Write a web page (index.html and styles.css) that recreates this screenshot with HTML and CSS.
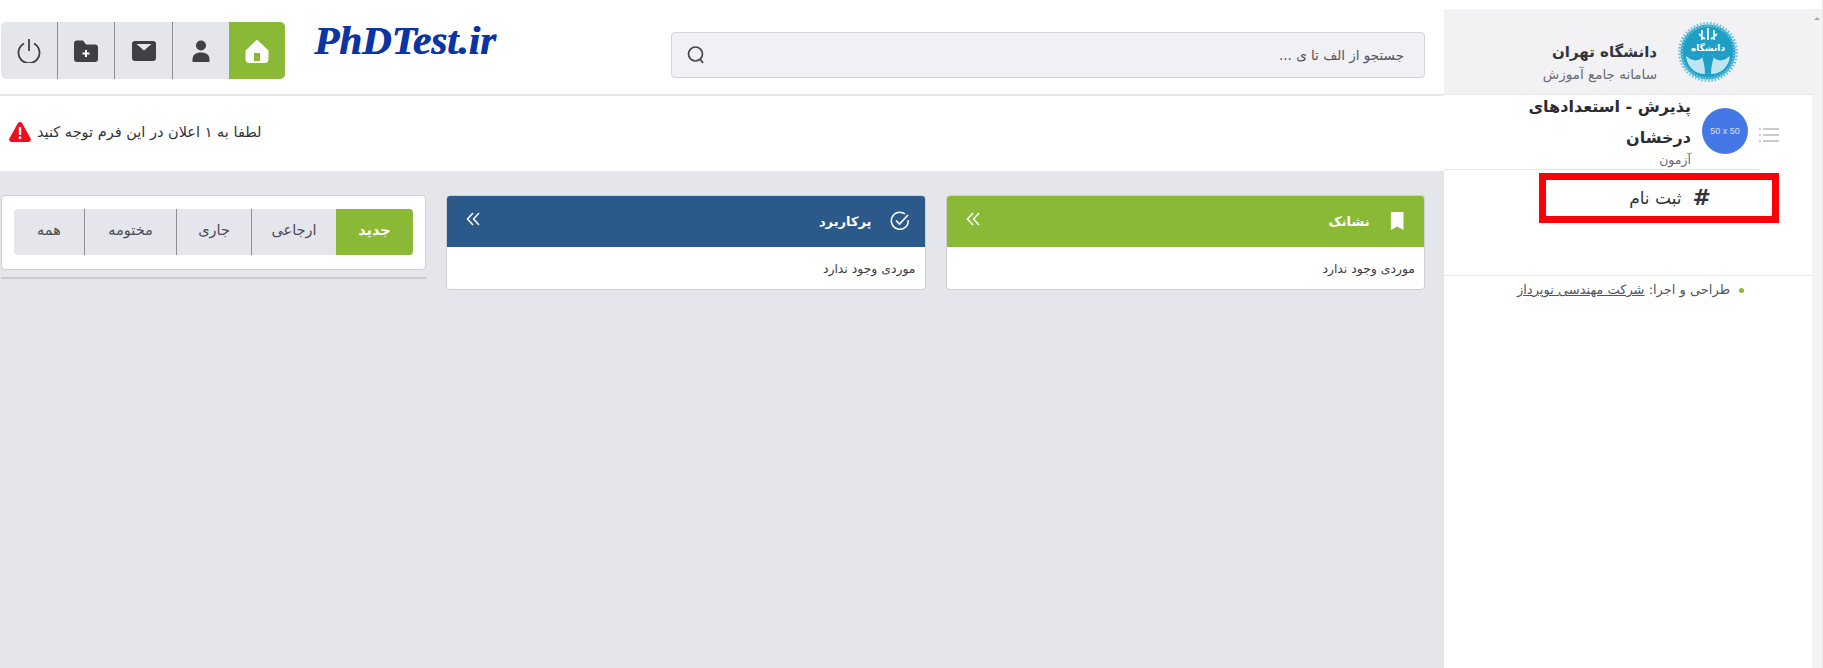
FILE: index.html
```html
<!DOCTYPE html>
<html lang="fa" dir="rtl">
<head>
<meta charset="utf-8">
<title>PhDTest</title>
<link rel="stylesheet" href="styles.css">
</head>
<body>
<div class="app">
  <aside class="sidebar">
    <div class="track"><span class="track-arrow"></span></div>
    <div class="panel">
      <div class="brand">
        <svg class="seal" viewBox="0 0 60 60" aria-hidden="true">
          <circle cx="30" cy="30" r="27.5" fill="#2aa3c9" stroke="#6cc3dc" stroke-width="5" stroke-dasharray="1.6 1.6"/>
          <circle cx="30" cy="30" r="25" fill="#1f9fc7"/>
          <path d="M24 8v10M30 6v12M36 8v10M21 12l6 5M39 12l-6 5" stroke="#e8f6fb" stroke-width="1.8" fill="none"/>
          <text x="30" y="29" class="seal-text" text-anchor="middle">دانشگاه</text>
          <path d="M26 33c-5 8-12 6-18 1 1 10 8 18 19 18zM34 33c5 8 12 6 18 1-1 10-8 18-19 18z" fill="#bfe5f1"/>
          <path d="M24 34h12l-3 12h-6z" fill="#1f9fc7"/>
        </svg>
        <div class="brand-text">
          <div class="brand-name">دانشگاه تهران</div>
          <div class="brand-sub">سامانه جامع آموزش</div>
        </div>
      </div>
      <div class="user">
        <svg class="list-icon" viewBox="0 0 20 14" aria-hidden="true">
          <path d="M0 1h2M4 1h16M0 7h2M4 7h16M0 13h2M4 13h16" stroke="#9a9aa2" stroke-width="1.2" fill="none"/>
        </svg>
        <div class="avatar" dir="ltr">50 x 50</div>
        <div class="user-text">
          <div class="user-name">پذیرش - استعدادهای درخشان</div>
          <div class="user-role">آزمون</div>
        </div>
      </div>
      <div class="user-rule"></div>
      <nav class="menu">
        <div class="menu-item"><span class="hash">#</span><span>ثبت نام</span></div>
      </nav>
      <div class="credit">
        <span class="bullet"></span>
        <span>طراحی و اجرا: <a class="credit-link" href="#">شرکت مهندسی نوپرداز</a></span>
      </div>
    </div>
  </aside>

  <main class="main">
    <header class="topbar">
      <div class="search">
        <span class="search-hint">جستجو از الف تا ی ...</span>
        <svg class="search-icon" viewBox="0 0 20 20" aria-hidden="true">
          <circle cx="9.5" cy="9" r="7" fill="none" stroke="#44444c" stroke-width="1.7"/>
          <path d="M14 14l3 4" stroke="#44444c" stroke-width="1.7" fill="none"/>
        </svg>
      </div>
      <div class="logo" dir="ltr">PhDTest.ir</div>
      <div class="tools">
        <a class="tool tool-active" href="#">
          <svg class="ico" viewBox="0 0 24 24" aria-hidden="true"><path fill="#fff" fill-rule="evenodd" d="M12 0.500L23.500 11.500V20a4 4 0 0 1-4 4H4.500a4 4 0 0 1-4-4V11.500zM9 14v8h6v-8z"/></svg>
        </a>
        <a class="tool" href="#">
          <svg class="ico" viewBox="0 0 24 24" aria-hidden="true"><circle cx="12" cy="6.500" r="5" fill="#3f3f46"/><path fill="#3f3f46" d="M3.500 23v-2.500C3.500 15.500 7 13.500 12 13.500s8.500 2 8.500 7V23z"/></svg>
        </a>
        <a class="tool" href="#">
          <svg class="ico" viewBox="0 0 24 24" aria-hidden="true"><path fill="#3f3f46" d="M3 2h18a3 3 0 0 1 3 3v14a3 3 0 0 1-3 3H3a3 3 0 0 1-3-3V5a3 3 0 0 1 3-3z"/><path fill="#e5e5ec" d="M4.500 5h15L12 11.500z"/></svg>
        </a>
        <a class="tool" href="#">
          <svg class="ico" viewBox="0 0 24 24" aria-hidden="true"><path fill="#3f3f46" d="M3 1.500h6l3 4h9a3 3 0 0 1 3 3V20a3 3 0 0 1-3 3H3a3 3 0 0 1-3-3V4.500a3 3 0 0 1 3-3z"/><path stroke="#fff" stroke-width="2" d="M12 11v7M8.500 14.500h7"/></svg>
        </a>
        <a class="tool" href="#">
          <svg class="ico" viewBox="0 0 24 24" aria-hidden="true"><path fill="none" stroke="#3f3f46" stroke-width="1.800" d="M7 4.500a10.500 10.500 0 1 0 10 0M12 0v12"/></svg>
        </a>
      </div>
    </header>

    <section class="notice">
      <span>لطفا به ۱ اعلان در این فرم توجه کنید</span>
      <svg class="warn" viewBox="0 0 22 20" aria-hidden="true">
        <path fill="#ee0f1c" d="M11 0c1 0 1.800.6 2.300 1.500l8.200 14.800c.9 1.600-.2 3.700-2.100 3.700H2.600C.7 20-.4 17.900.5 16.300L8.700 1.500C9.200.6 10 0 11 0z"/>
        <path stroke="#fff" stroke-width="2.400" d="M11 5v8M11 14.500v2.500"/>
      </svg>
    </section>

    <section class="board">
      <article class="card">
        <header class="card-head card-head-green">
          <svg class="card-ico" viewBox="0 0 16 20" aria-hidden="true"><path fill="#fff" d="M1 0h14v20l-7-4-7 4z"/></svg>
          <span class="card-title">نشانک</span>
          <svg class="chev" viewBox="0 0 14 14" aria-hidden="true"><path fill="none" stroke="#fff" stroke-width="1.500" d="M7 1L1.500 7 7 13M13 1L7.500 7 13 13"/></svg>
        </header>
        <div class="card-body">موردی وجود ندارد</div>
      </article>
      <article class="card">
        <header class="card-head card-head-blue">
          <svg class="card-ico" viewBox="0 0 20 20" aria-hidden="true"><path fill="none" stroke="#fff" stroke-width="1.500" d="M15 3A8.500 8.500 0 1 0 18.300 9"/><path fill="none" stroke="#fff" stroke-width="1.700" d="M6 9.500l3.500 3.500L18 4"/></svg>
          <span class="card-title">پرکاربرد</span>
          <svg class="chev" viewBox="0 0 14 14" aria-hidden="true"><path fill="none" stroke="#fff" stroke-width="1.500" d="M7 1L1.500 7 7 13M13 1L7.500 7 13 13"/></svg>
        </header>
        <div class="card-body">موردی وجود ندارد</div>
      </article>
      <div class="tabs-col">
        <div class="tabs-card">
          <div class="tabs">
            <a class="tab tab-active" href="#">جدید</a>
            <a class="tab tab-2" href="#">ارجاعی</a>
            <a class="tab tab-3" href="#">جاری</a>
            <a class="tab tab-4" href="#">مختومه</a>
            <a class="tab tab-5" href="#">همه</a>
          </div>
        </div>
        <div class="tabs-rule"></div>
      </div>
    </section>
  </main>
</div>
</body>
</html>
```
FILE: styles.css
```css
* { box-sizing: border-box; }
html, body { margin: 0; height: 100%; overflow: hidden; background: #fff; }
body { font-family: "DejaVu Sans", "Noto Sans", sans-serif; color: #33333a; }
a { color: inherit; text-decoration: none; }

.app { display: flex; height: 668px; }

/* sidebar */
.sidebar { width: 379px; flex: none; display: flex; padding-top: 9px; border-right: 1px solid #e6e6ea; }
.track { width: 10px; flex: none; background: #f3f3f5; display: flex; justify-content: center; padding-top: 5px; }
.track-arrow { width: 0; height: 0; border: 3px solid transparent; border-bottom: 3px solid #a8a8a8; }
.panel { flex: 1; display: flex; flex-direction: column; background: #fff; }

.brand { height: 85px; flex: none; background: #f2f2f5; display: flex; align-items: center; gap: 21px; padding-right: 74px; }
.seal { width: 60px; height: 60px; flex: none; margin-top: 1px; }
.seal-text { font-size: 9px; font-weight: 700; fill: #fff; }
.brand-text { padding-top: 21px; }
.brand-name { font-size: 15px; font-weight: 700; line-height: 22px; color: #33333a; }
.brand-sub { font-size: 13.500px; line-height: 20px; color: #6a6a72; margin-top: 1px; }

.user { height: 76px; flex: none; display: flex; align-items: flex-start; padding-right: 33px; border-top: 1px solid #e8e8ec; }
.list-icon { width: 20px; height: 14px; flex: none; margin: 33px 0 0 11px; }
.avatar { width: 46px; height: 46px; flex: none; margin: 13px 0 0 11px; border-radius: 50%; background: #4478e6; color: #d6e2fb; font: 9px/46px "Liberation Sans", sans-serif; text-align: center; }
.user-text { width: 176px; margin-top: -4px; }
.user-name { font-size: 16px; font-weight: 700; line-height: 31px; color: #2c2c33; }
.user-role { font-size: 12.500px; line-height: 20px; color: #6a6a72; margin-top: -3px; }
.user-rule { width: 316px; height: 1px; flex: none; background: #e8e8ec; margin-right: 53px; margin-top: -1px; }

.menu { height: 106px; flex: none; padding: 3px 33px 0 0; border-bottom: 1px solid #e8e8ec; }
.menu-item { width: 240px; height: 50px; border: 7px solid #fb0007; display: flex; align-items: center; gap: 11px; padding-right: 61px; font-size: 17px; color: #33333a; }
.hash { font-size: 22px; font-weight: 700; line-height: 1; font-family: "DejaVu Sans", sans-serif; }

.credit { display: flex; align-items: center; gap: 9px; padding: 4px 68px 0 0; font-size: 13px; line-height: 20px; color: #55555c; }
.bullet { width: 5px; height: 5px; border-radius: 50%; background: #8aba35; flex: none; }
.credit-link { text-decoration: underline; }

/* main */
.main { flex: 1; min-width: 0; display: flex; flex-direction: column; background: #e5e5ec; }
.topbar { height: 96px; flex: none; background: #fff; border-bottom: 2px solid #e8e8ec; display: flex; align-items: flex-start; padding-left: 1px; padding-right: 19px; }
.search { width: 754px; height: 46px; margin-top: 32px; background: #f0f0f5; border: 1px solid #d5d5dc; border-radius: 4px; display: flex; align-items: center; justify-content: space-between; padding: 0 20px 0 14px; }
.search-hint { font-size: 13.500px; color: #55555c; }
.search-icon { width: 20px; height: 20px; }
.logo { margin: 16px auto 0 29px; width: 186px; font: italic 700 41px/48px "Liberation Serif", serif; color: #0c35a3; text-shadow: .7px 0 0 #0c35a3; white-space: nowrap; }
.tools { display: flex; width: 284px; height: 57px; margin-top: 22px; background: #e5e5ec; border-radius: 5px; overflow: hidden; }
.tool { flex: 1; display: flex; align-items: center; justify-content: center; border-right: 1px solid #8d8d94; }
.tool:first-child { border-right: 0; }
.tool-active { background: #8aba35; }
.tool-active + .tool { border-right: 0; }
.ico { width: 24px; height: 24px; }

.notice { height: 75px; flex: none; background: #fff; display: flex; align-items: center; justify-content: flex-end; gap: 6px; padding: 0 0 3px 9px; font-size: 14.500px; color: #33333a; }
.warn { width: 22px; height: 20px; flex: none; }

.board { flex: 1; display: grid; grid-template-columns: 1fr 1fr 425px; column-gap: 20px; align-items: start; padding: 24px 19px 0 1px; }
.card { height: 95px; border-radius: 4px; overflow: hidden; background: #fff; border: 1px solid #cfcfd5; }
.card-head { height: 52px; margin: -1px -1px 0; display: flex; align-items: center; gap: 18px; padding: 0 20px; color: #fff; }
.card-head-green { background: #8aba35; padding-right: 21px; gap: 20px; }
.card-head-blue { background: #2b5a8a; padding-right: 16px; }
.card-ico { height: 18px; width: auto; flex: none; }
.card-head-blue .card-ico { height: 20px; }
.card-title { font-size: 13px; font-weight: 700; flex: 1; }
.chev { width: 14px; height: 14px; flex: none; margin-bottom: 4px; }
.card-body { height: 43px; padding: 10px 9px 0; font-size: 12.400px; line-height: 24px; color: #3a3a42; }

.tabs-card { height: 75px; background: #fff; border-radius: 4px; padding: 13px 12px; border: 1px solid #cfcfd5; }
.tabs { display: flex; height: 46px; background: #e5e5ec; border-radius: 4px; overflow: hidden; }
.tab { display: flex; align-items: center; justify-content: center; font-size: 14.500px; color: #4a4a52; border-right: 1px solid #8d8d94; padding-bottom: 4px; }
.tab-active { width: 77px; background: #8aba35; color: #fff; font-weight: 700; border-right: 0; }
.tab-2 { width: 84px; border-right: 0; }
.tab-3 { width: 75px; }
.tab-4 { width: 92px; }
.tab-5 { flex: 1; }
.tabs-rule { height: 2px; background: #c8c8ce; margin-top: 7px; }
```
